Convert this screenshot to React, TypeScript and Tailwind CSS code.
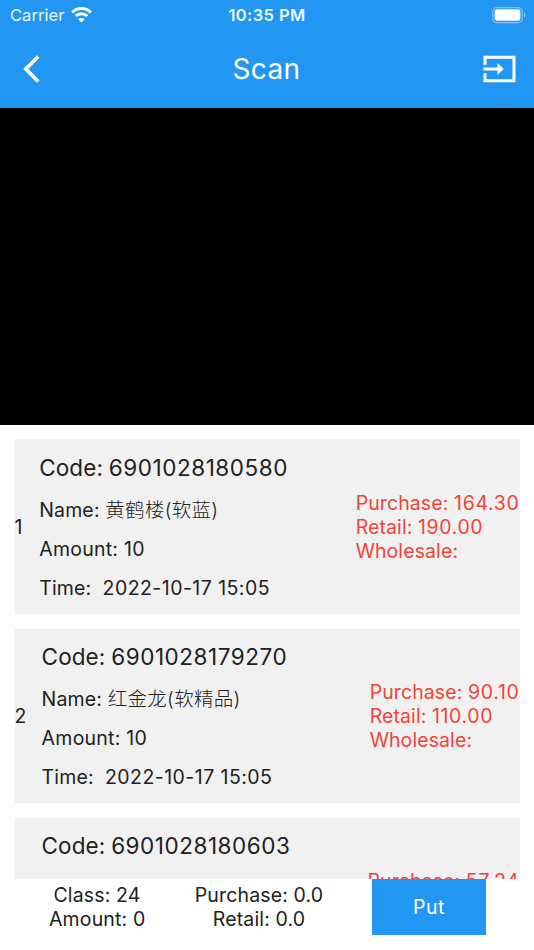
import { useState } from "react";

interface Item {
  code: string;
  name?: string;
  amount?: number;
  time?: string;
  purchase: string;
  retail?: string;
  wholesale?: string;
}

const items: Item[] = [
  {
    code: "6901028180580",
    name: "黄鹤楼(软蓝)",
    amount: 10,
    time: "2022-10-17 15:05",
    purchase: "164.30",
    retail: "190.00",
    wholesale: "",
  },
  {
    code: "6901028179270",
    name: "红金龙(软精品)",
    amount: 10,
    time: "2022-10-17 15:05",
    purchase: "90.10",
    retail: "110.00",
    wholesale: "",
  },
  {
    code: "6901028180603",
    purchase: "57.24",
  },
];

function StatusBar() {
  return (
    <div className="grid h-[30px] grid-cols-3 items-center pr-2 pl-[10px]">
      <div className="flex items-center gap-[7px]">
        <span className="text-[16.5px] leading-none tracking-[0.05px] text-white/90">Carrier</span>
        <svg width="21" height="16" viewBox="0 0 21 16" fill="none" stroke="#fff" strokeWidth="3">
          <path d="M1.2 5.4a13.2 13.2 0 0 1 18.6 0" />
          <path d="M4.7 9a8.3 8.3 0 0 1 11.6 0" />
          <path d="M10.5 15.6 7.3 12.3a4.6 4.6 0 0 1 6.4 0Z" fill="#fff" stroke="none" />
        </svg>
      </div>
      <span className="-ml-[2px] text-center text-[16.5px] leading-none font-semibold tracking-[0.4px] whitespace-nowrap text-white/90">
        10:35 PM
      </span>
      <svg className="justify-self-end" width="34" height="17" viewBox="0 0 34 17">
        <rect x="0.7" y="0.6" width="29.6" height="15" rx="4.2" fill="none" stroke="#fff" strokeOpacity="0.45" strokeWidth="1.2" />
        <rect x="2.6" y="2.3" width="25.8" height="11.4" rx="2.6" fill="#fff" />
        <path d="M32 5.5c1.7.7 1.7 4.1 0 4.8Z" fill="#fff" fillOpacity="0.5" />
      </svg>
    </div>
  );
}

function NavBar() {
  return (
    <div className="grid h-[78px] grid-cols-3 items-center pr-[18px] pl-[23px]">
      <button aria-label="Back">
        <svg width="17" height="28" viewBox="0 0 17 28" fill="none" stroke="#fff" strokeWidth="3.6">
          <path d="M15.2 1.6 2.8 14 15.2 26.4" />
        </svg>
      </button>
      <h1 className="-ml-[6px] text-center text-[28px] leading-none tracking-[0.4px] text-white">Scan</h1>
      <button aria-label="Input" className="justify-self-end">
        <svg width="33" height="28" viewBox="0 0 33 28" fill="#fff">
          <path d="M0.5 9.7V0.8h32v26.4h-32V18h3v6.2h26V3.8h-26v5.9Z" />
          <path d="M0.5 12.5h14V8l6.3 6-6.3 6v-4.5h-14Z" />
        </svg>
      </button>
    </div>
  );
}

function ItemCard({ item, index }: { item: Item; index: number }) {
  // Rows that have not been loaded yet stay empty
  const loaded = item.name !== undefined;

  return (
    <div className="flex h-[174.7px] shrink-0 bg-[#f1f1f1] text-[19.5px] leading-6">
      <span className="min-w-[9.5px] self-center">{loaded && index}</span>
      <div className={loaded ? "ml-[15.2px] flex-1 pt-[14.3px]" : "ml-[17.5px] flex-1 pt-[14.3px]"}>
        <p className="text-[22.5px] leading-7 tracking-[0.1px] [word-spacing:-0.6px]">
          Code: <span className="tracking-[0.53px]">{item.code}</span>
        </p>
        {loaded && (
          <>
            <p className="mt-4 tracking-[0.15px]">
              Name: <span className="font-light tracking-[0.3px]">{item.name}</span>
            </p>
            <p className="mt-[15px] tracking-[0.25px]">Amount: {item.amount}</p>
            <p className="mt-[15px] tracking-[0.15px] whitespace-pre">
              Time:  <span className="tracking-[0.45px]">{item.time}</span>
            </p>
          </>
        )}
      </div>
      <div className="pt-[51.3px] tracking-[0.1px] text-[#f44336]">
        <p>
          Purchase: <span className="tracking-[0.68px]">{item.purchase}</span>
        </p>
        {loaded && (
          <>
            <p>
              Retail: <span className="tracking-[0.6px]">{item.retail}</span>
            </p>
            <p>Wholesale: {item.wholesale}</p>
          </>
        )}
      </div>
    </div>
  );
}

export default function App() {
  const [list] = useState(items);

  return (
    <div className="flex h-[950px] w-[534px] flex-col overflow-hidden bg-white font-['Inter','Noto_Sans_CJK_SC',sans-serif] text-[#212121]">
      <header className="h-[108px] shrink-0 bg-[#2196f3]">
        <StatusBar />
        <NavBar />
      </header>

      {/* Camera preview */}
      <div className="h-[317px] shrink-0 bg-black" />

      <main className="flex h-[454px] shrink-0 flex-col gap-[14.5px] overflow-hidden px-[14.5px] pt-[14.4px]">
        {list.map((item, i) => (
          <ItemCard key={item.code} item={item} index={i + 1} />
        ))}
      </main>

      <footer className="flex flex-1 items-start pr-12 text-[19.5px] leading-6 tracking-[0.15px]">
        <div className="ml-[49px] w-24 pt-1 text-center whitespace-nowrap">
          <p>Class: 24</p>
          <p>Amount: 0</p>
        </div>
        <div className="ml-[49px] w-[130px] pt-1 text-center whitespace-nowrap">
          <p>Purchase: 0.0</p>
          <p>Retail: 0.0</p>
        </div>
        <button className="ml-auto h-[56px] w-[114px] bg-[#2196f3] tracking-[0.5px] text-white">Put</button>
      </footer>
    </div>
  );
}
